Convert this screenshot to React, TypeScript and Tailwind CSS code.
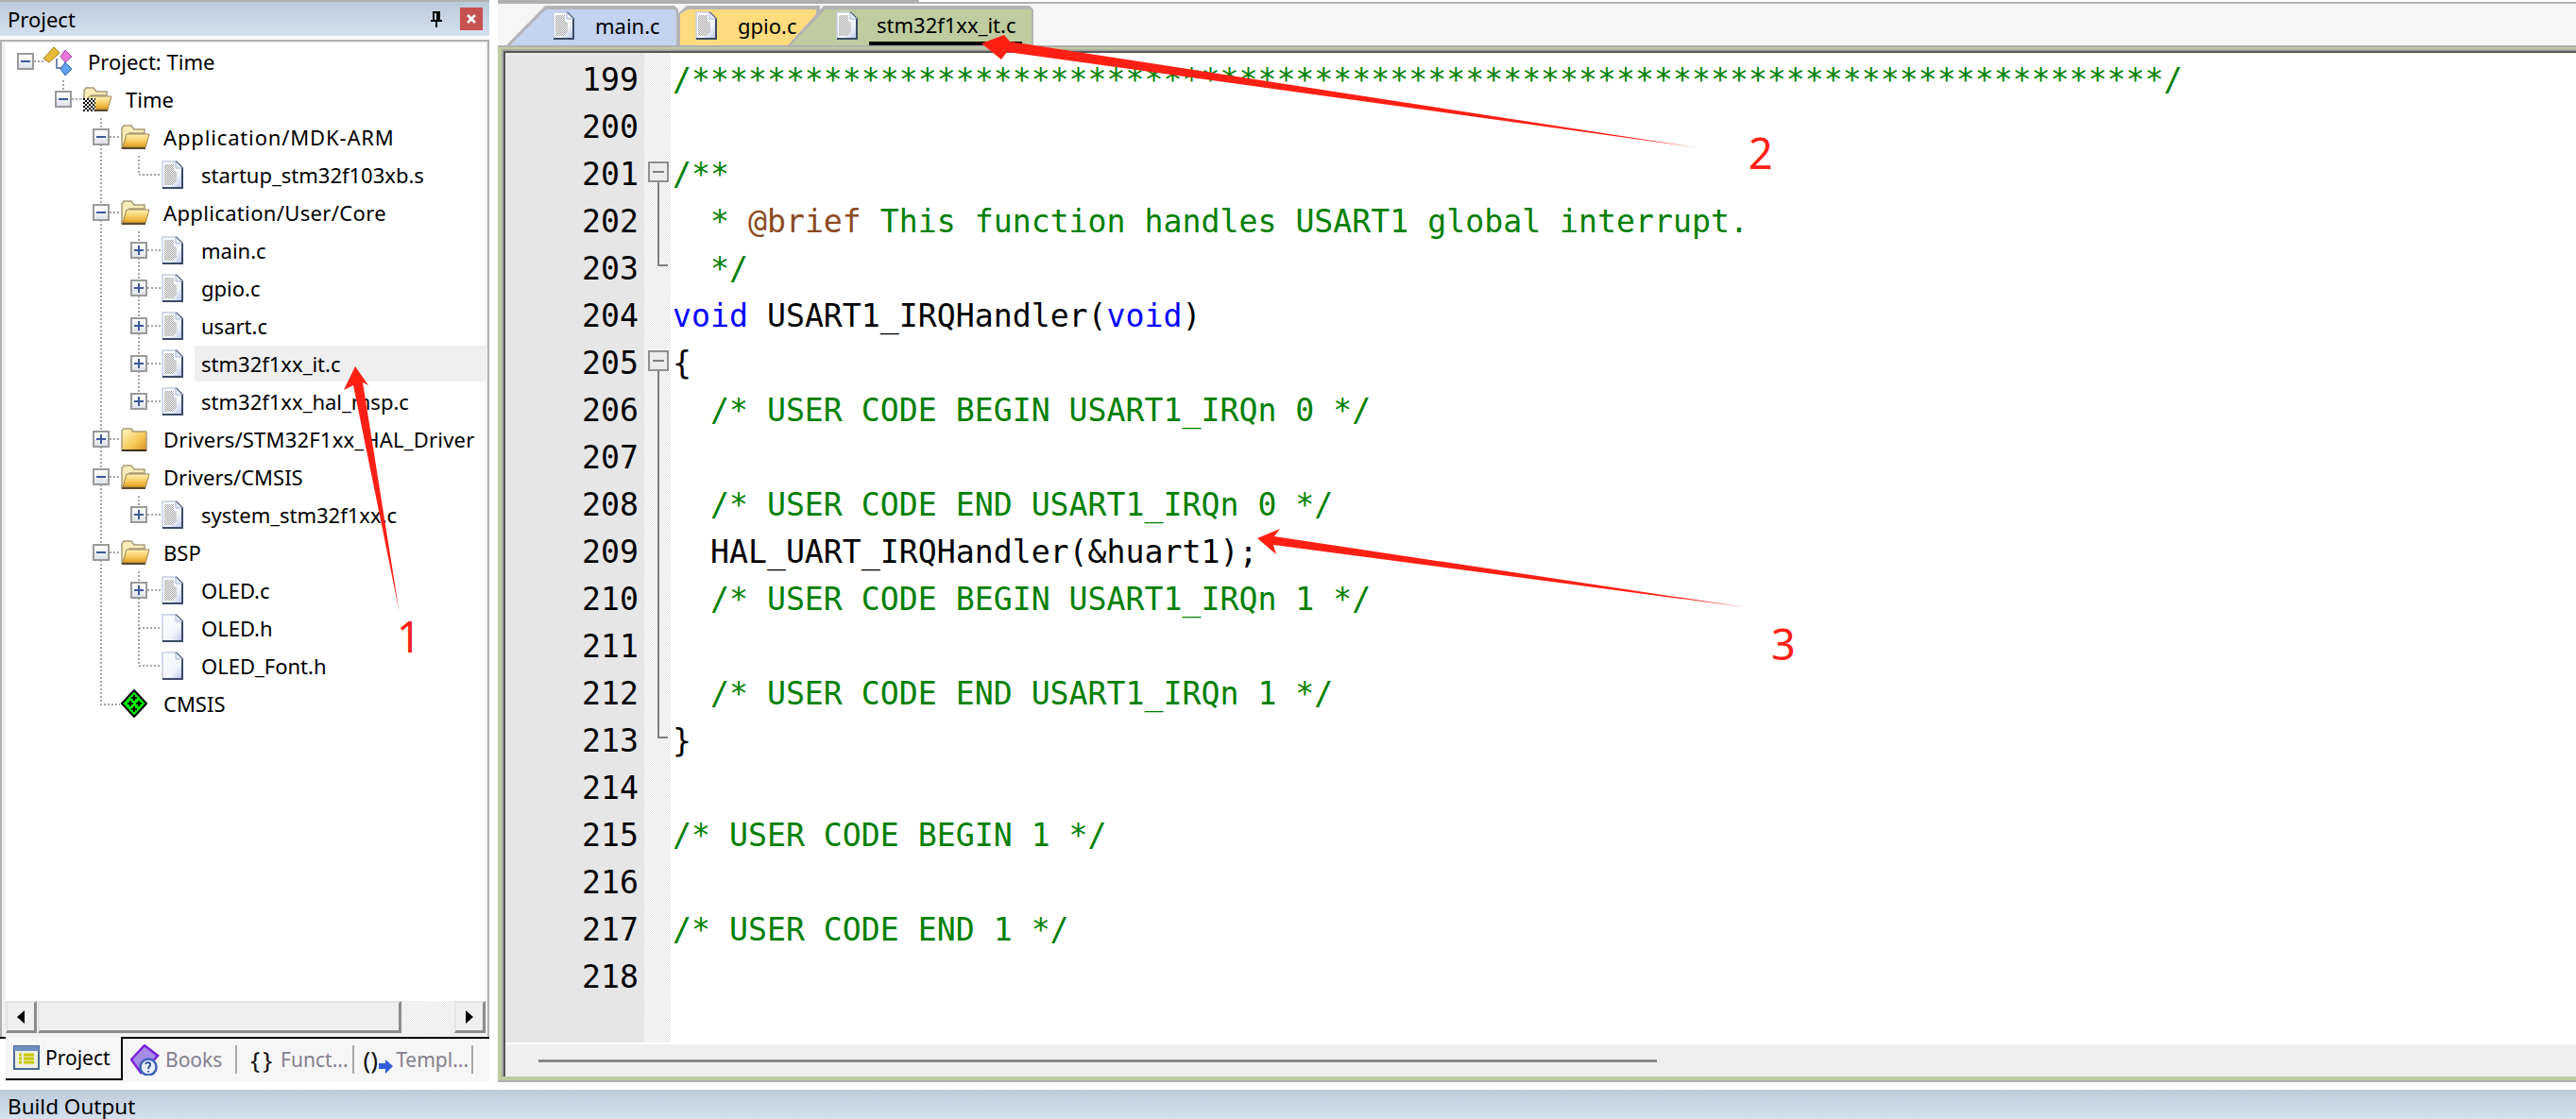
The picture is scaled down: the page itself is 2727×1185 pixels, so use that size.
import React from 'react';

const ui = "[font-family:'Noto_Sans',sans-serif]";
const dither = '[background:repeating-conic-gradient(#e4e4e4_0%_25%,#ffffff_0%_50%)_0_0/2px_2px]';

type Seg = { t: string; c?: string };
type Fold = 'open' | 'mid' | 'end' | 'none';

const green = 'text-[#008000]';
const blue = 'text-[#0000ff]';
const brown = 'text-[#8b4a1f]';

const cm = (t: string): Seg[] => [{ t, c: green }];

const codeLines: { n: number; segs: Seg[]; fold: Fold }[] = [
  { n: 199, segs: cm('/' + '*'.repeat(78) + '/'), fold: 'none' },
  { n: 200, segs: [], fold: 'none' },
  { n: 201, segs: cm('/**'), fold: 'open' },
  {
    n: 202,
    segs: [
      { t: '  * ', c: green },
      { t: '@brief', c: brown },
      { t: ' This function handles USART1 global interrupt.', c: green },
    ],
    fold: 'mid',
  },
  { n: 203, segs: cm('  */'), fold: 'end' },
  {
    n: 204,
    segs: [
      { t: 'void', c: blue },
      { t: ' USART1_IRQHandler(' },
      { t: 'void', c: blue },
      { t: ')' },
    ],
    fold: 'none',
  },
  { n: 205, segs: [{ t: '{' }], fold: 'open' },
  { n: 206, segs: cm('  /* USER CODE BEGIN USART1_IRQn 0 */'), fold: 'mid' },
  { n: 207, segs: [], fold: 'mid' },
  { n: 208, segs: cm('  /* USER CODE END USART1_IRQn 0 */'), fold: 'mid' },
  { n: 209, segs: [{ t: '  HAL_UART_IRQHandler(&huart1);' }], fold: 'mid' },
  { n: 210, segs: cm('  /* USER CODE BEGIN USART1_IRQn 1 */'), fold: 'mid' },
  { n: 211, segs: [], fold: 'mid' },
  { n: 212, segs: cm('  /* USER CODE END USART1_IRQn 1 */'), fold: 'mid' },
  { n: 213, segs: [{ t: '}' }], fold: 'end' },
  { n: 214, segs: [], fold: 'none' },
  { n: 215, segs: cm('/* USER CODE BEGIN 1 */'), fold: 'none' },
  { n: 216, segs: [], fold: 'none' },
  { n: 217, segs: cm('/* USER CODE END 1 */'), fold: 'none' },
  { n: 218, segs: [], fold: 'none' },
];

type Kind = 'project' | 'target' | 'open' | 'closed' | 'doc' | 'header' | 'pack';
type Node = { label: string; depth: number; kind: Kind; box?: '+' | '-'; active?: boolean; spacing?: string };

const treeRows: Node[] = [
  { label: 'Project: Time', depth: 0, kind: 'project', box: '-' },
  { label: 'Time', depth: 1, kind: 'target', box: '-' },
  { label: 'Application/MDK-ARM', depth: 2, kind: 'open', box: '-', spacing: 'tracking-[0.85px]' },
  { label: 'startup_stm32f103xb.s', depth: 3, kind: 'doc' },
  { label: 'Application/User/Core', depth: 2, kind: 'open', box: '-', spacing: 'tracking-[0.35px]' },
  { label: 'main.c', depth: 3, kind: 'doc', box: '+' },
  { label: 'gpio.c', depth: 3, kind: 'doc', box: '+' },
  { label: 'usart.c', depth: 3, kind: 'doc', box: '+' },
  { label: 'stm32f1xx_it.c', depth: 3, kind: 'doc', box: '+', active: true },
  { label: 'stm32f1xx_hal_msp.c', depth: 3, kind: 'doc', box: '+' },
  { label: 'Drivers/STM32F1xx_HAL_Driver', depth: 2, kind: 'closed', box: '+', spacing: 'tracking-[0.2px]' },
  { label: 'Drivers/CMSIS', depth: 2, kind: 'open', box: '-' },
  { label: 'system_stm32f1xx.c', depth: 3, kind: 'doc', box: '+' },
  { label: 'BSP', depth: 2, kind: 'open', box: '-' },
  { label: 'OLED.c', depth: 3, kind: 'doc', box: '+' },
  { label: 'OLED.h', depth: 3, kind: 'header' },
  { label: 'OLED_Font.h', depth: 3, kind: 'header' },
  { label: 'CMSIS', depth: 2, kind: 'pack' },
];

const paddingByDepth = ['pl-[12px]', 'pl-[52px]', 'pl-[92px]', 'pl-[132px]'];

function DocIcon({ plain = false }: { plain?: boolean }) {
  return (
    <svg width="23" height="30" viewBox="0 0 23 30" className="shrink-0">
      <defs>
        <linearGradient id={plain ? 'pageH' : 'pageC'} x1="0" y1="0" x2="1" y2="1">
          <stop offset="0" stopColor="#ffffff" />
          <stop offset="0.65" stopColor="#f2f5fc" />
          <stop offset="1" stopColor="#b4c3e6" />
        </linearGradient>
        <pattern id="docDots" width="2" height="2" patternUnits="userSpaceOnUse">
          <rect width="2" height="2" fill="#f4f4f4" />
          <rect width="1" height="1" fill="#a8a8a8" />
          <rect x="1" y="1" width="1" height="1" fill="#a8a8a8" />
        </pattern>
      </defs>
      <path d="M1 1H15L22 8V29H1Z" fill={`url(#${plain ? 'pageH' : 'pageC'})`} stroke="#c4cee4" strokeWidth="1.5" />
      {!plain && <path d="M3 4H13V10L16 12V22L12 26H3Z" fill="url(#docDots)" />}
      <path d="M15 1L22 8V29H1" fill="none" stroke="#3c4a68" strokeWidth="2" />
      <path d="M15 1V8H22" fill="#e6ecf8" stroke="#aab8d4" strokeWidth="1" />
    </svg>
  );
}

function OpenFolder({ badge = false }: { badge?: boolean }) {
  return (
    <svg width="31" height="26" viewBox="0 0 31 26" className="shrink-0">
      <defs>
        <linearGradient id="folderFront" x1="0" y1="0" x2="0" y2="1">
          <stop offset="0" stopColor="#fff3b8" />
          <stop offset="0.55" stopColor="#f8c95a" />
          <stop offset="1" stopColor="#e09a1c" />
        </linearGradient>
        <pattern id="checker" width="4" height="4" patternUnits="userSpaceOnUse">
          <rect width="4" height="4" fill="#ffffff" />
          <rect width="2" height="2" fill="#000000" />
          <rect x="2" y="2" width="2" height="2" fill="#000000" />
        </pattern>
      </defs>
      <path d="M1 25V4L3 1H11L14 5H25V9H9L5 25Z" fill="#f8ecb8" stroke="#a89a78" strokeWidth="1.5" />
      <path d="M6 10H30L26 24H2Z" fill="url(#folderFront)" stroke="#9a8350" strokeWidth="1" />
      <path d="M1 25H26" stroke="#5a4a30" strokeWidth="2" />
      {badge && <rect x="0" y="12" width="13" height="14" fill="url(#checker)" />}
    </svg>
  );
}

function ClosedFolder() {
  return (
    <svg width="28" height="25" viewBox="0 0 28 25" className="shrink-0">
      <defs>
        <linearGradient id="folderShut" x1="0" y1="0" x2="1" y2="1">
          <stop offset="0" stopColor="#fff6c4" />
          <stop offset="0.6" stopColor="#f6c857" />
          <stop offset="1" stopColor="#d68f1a" />
        </linearGradient>
      </defs>
      <path d="M1 24V3L3 1H11L13 4H27V24Z" fill="url(#folderShut)" stroke="#a89a78" strokeWidth="1.5" />
      <path d="M1 24H27" stroke="#3e3018" strokeWidth="2" />
    </svg>
  );
}

function ProjectIcon() {
  return (
    <svg width="30" height="30" viewBox="0 0 30 30" className="shrink-0">
      <path d="M14 12V22H22" fill="none" stroke="#7088b0" strokeWidth="2" />
      <path d="M0 12L11 0L17 6L6 16Z" fill="#e8bc38" stroke="#9c7c18" strokeWidth="1" />
      <path d="M23 3L30 10L23 16L18 10Z" fill="#e878e0" stroke="#a848a0" strokeWidth="1" />
      <path d="M23 16L30 23L23 30L18 23Z" fill="#60a0ee" stroke="#3068b0" strokeWidth="1" />
    </svg>
  );
}

function PackIcon() {
  return (
    <svg width="28" height="30" viewBox="0 0 28 30" className="shrink-0">
      <path d="M14 1L27 15L14 29L1 15Z" fill="#00ee00" stroke="#000000" strokeWidth="2" />
      <path
        d="M14 6V12M11 9H17M14 18V24M11 21H17M7 15H13M10 12V18M16 15H22M19 12V18"
        stroke="#000000"
        strokeWidth="2"
      />
    </svg>
  );
}

function TreeIcon({ kind }: { kind: Kind }) {
  if (kind === 'project') return <ProjectIcon />;
  if (kind === 'target') return <OpenFolder badge />;
  if (kind === 'open') return <OpenFolder />;
  if (kind === 'closed') return <ClosedFolder />;
  if (kind === 'pack') return <PackIcon />;
  return <DocIcon plain={kind === 'header'} />;
}

const iconOffset: Record<Kind, string> = {
  project: 'ml-[10px]',
  target: 'ml-[12px]',
  open: 'ml-[12px]',
  closed: 'ml-[12px]',
  pack: 'ml-[12px]',
  doc: 'ml-[15px]',
  header: 'ml-[15px]',
};

function TreeBox({ sign }: { sign?: '+' | '-' }) {
  if (!sign) return <span className="w-[18px] h-[18px] shrink-0" />;
  return (
    <span className="relative z-10 w-[18px] h-[18px] shrink-0 border-2 border-[#9a9a9a] bg-gradient-to-b from-white to-[#dfe3ea] flex items-center justify-center">
      <span className="absolute w-[10px] h-[2px] bg-[#3d5a9c]" />
      {sign === '+' && <span className="absolute w-[2px] h-[10px] bg-[#3d5a9c]" />}
    </span>
  );
}

function TreeGuides() {
  // dotted connectors, in page coordinates
  const guides = [
    'M36 66H46',
    'M67 86V97',
    'M76 106H86',
    'M107 126V747H127',
    'M116 146H126',
    'M116 226H126',
    'M116 466H126',
    'M116 506H126',
    'M116 586H126',
    'M147 166V186H170',
    'M147 246V426',
    'M156 266H170',
    'M156 306H170',
    'M156 346H170',
    'M156 386H170',
    'M156 426H170',
    'M147 526V546',
    'M156 546H170',
    'M147 606V706H170',
    'M156 626H170',
    'M147 666H170',
  ];
  return (
    <svg className="absolute left-0 top-0 w-full h-[760px] pointer-events-none">
      <g transform="translate(-6 -47)" fill="none" stroke="#a6a6a6" strokeWidth="2" strokeDasharray="2 2">
        {guides.map((d) => (
          <path key={d} d={d} />
        ))}
      </g>
    </svg>
  );
}

function ScrollButton({ dir }: { dir: 'left' | 'right' }) {
  return (
    <div className="w-[33px] h-[34px] shrink-0 bg-[#f0f0f0] border-t-2 border-l-2 border-t-[#e4e4e4] border-l-[#e4e4e4] border-b-[3px] border-r-[3px] border-b-[#8c8c8c] border-r-[#8c8c8c] flex items-center justify-center">
      <svg width="8" height="14" viewBox="0 0 8 14">
        <path d={dir === 'left' ? 'M8 0V14L0 7Z' : 'M0 0V14L8 7Z'} fill="#000000" />
      </svg>
    </div>
  );
}

function ProjectPanel() {
  return (
    <div className="w-[518px] shrink-0 flex flex-col">
      <div className="h-[2px] bg-[#b0b0b0]" />
      <div className="h-[36px] bg-gradient-to-b from-[#bccbdb] to-[#d3e0ee] flex items-center pl-[8px] pr-[7px]">
        <span className={`${ui} text-[22px] text-black leading-none`}>Project</span>
        <svg width="14" height="18" viewBox="0 0 14 18" className="ml-auto mr-[18px]">
          <path d="M3 1H11V10H13V12H8V18H6V12H1V10H3Z M5 3V10H7V3Z" fill="#000000" fillRule="evenodd" />
        </svg>
        <div className="w-[24px] h-[24px] bg-[#c75050] flex items-center justify-center">
          <svg width="10" height="10" viewBox="0 0 10 10">
            <path d="M1 1L9 9M9 1L1 9" stroke="#ffffff" strokeWidth="2.6" />
          </svg>
        </div>
      </div>
      <div className="h-[4px] bg-white" />
      <div className="h-[1056px] border-2 border-b-0 border-[#b0b0b0] bg-[#f0f0f0] pt-[2px] pl-[4px] pr-[2px] flex flex-col">
        <div className="relative h-[1014px] bg-white overflow-hidden">
          <TreeGuides />
          <div className="flex flex-col -mt-[1px]">
            {treeRows.map((row) => (
              <div key={row.label} className={`h-[40px] flex items-center ${paddingByDepth[row.depth] ?? ''}`}>
                <TreeBox sign={row.box} />
                <span className="w-[50px] shrink-0 flex items-center">
                  <span className={iconOffset[row.kind]}>
                    <TreeIcon kind={row.kind} />
                  </span>
                </span>
                <span
                  className={`${ui} h-[38px] flex-1 flex items-center pl-[7px] text-[22px] text-black whitespace-nowrap ${
                    row.active ? 'bg-[#efefef]' : ''
                  } ${row.spacing ?? ''}`}
                >
                  {row.label}
                </span>
              </div>
            ))}
          </div>
        </div>
        <div className="h-[34px] flex">
          <ScrollButton dir="left" />
          <div className="w-[385px] ml-[1px] shrink-0 bg-[#f0f0f0] border-t-2 border-t-[#e4e4e4] border-l-2 border-l-[#e4e4e4] border-b-[3px] border-r-[3px] border-b-[#8c8c8c] border-r-[#8c8c8c]" />
          <div className={`flex-1 ${dither}`} />
          <ScrollButton dir="right" />
        </div>
      </div>
      <PanelTabs />
    </div>
  );
}

function PanelTabs() {
  const inactive = `${ui} text-[21px] text-[#85808f] leading-none`;
  return (
    <div className="h-[48px] bg-[#f6f6f6] flex">
      <div className="w-[6px] border-t-2 border-black bg-white" />
      <div className="w-[124px] h-[46px] bg-[#f6f6f6] border-r-2 border-b-2 border-black flex items-center pl-[8px]">
        <svg width="28" height="26" viewBox="0 0 28 26" className="shrink-0">
          <rect x="1" y="1" width="26" height="24" fill="#f0efe0" stroke="#4a6c94" strokeWidth="2" />
          <rect x="1" y="1" width="26" height="5" fill="#6f8fc0" />
          <path d="M6 10H9M11 10H22M6 14H9M11 14H22M6 18H9M11 18H22" stroke="#c8c800" strokeWidth="3" />
        </svg>
        <span className={`${ui} ml-[6px] text-[21px] text-black leading-none`}>Project</span>
      </div>
      <div className="flex-1 border-t-2 border-black flex items-center h-[46px]">
        <svg width="32" height="33" viewBox="0 0 32 33" className="ml-[8px] shrink-0">
          <path d="M1 16L15 1L29 12L20 22L11 30Z" fill="#a78be8" stroke="#7a22d8" strokeWidth="2.5" />
          <circle cx="19" cy="24" r="8.5" fill="#e8eefc" stroke="#3c62b8" strokeWidth="2.5" />
          <path d="M16 21C17 18 22 19 21 22C20 24 19 24 19 26M19 28V29.5" fill="none" stroke="#2c4c98" strokeWidth="1.8" />
        </svg>
        <span className={`${inactive} ml-[5px]`}>Books</span>
        <span className="w-[2px] h-[30px] ml-[14px] bg-[#a8a8a8]" />
        <span className={`${ui} ml-[14px] text-[26px] text-[#111111] leading-none tracking-[3px]`}>{'{}'}</span>
        <span className={`${inactive} ml-[6px]`}>Funct...</span>
        <span className="w-[2px] h-[30px] ml-[4px] bg-[#a8a8a8]" />
        <span className={`${ui} ml-[10px] text-[26px] text-[#111111] leading-none`}>{'()'}</span>
        <svg width="15" height="15" viewBox="0 0 15 15" className="ml-[1px] mt-[14px] shrink-0">
          <path d="M0 4H7V0L15 7L7 15V10H0Z" fill="#2f5fd8" />
        </svg>
        <span className={`${inactive} ml-[3px]`}>Templ...</span>
        <span className="w-[2px] h-[30px] ml-[3px] bg-[#a8a8a8]" />
      </div>
    </div>
  );
}

function EditorTab({
  label,
  outline,
  fill,
  width,
  className,
  active = false,
}: {
  label: string;
  outline: string;
  fill: string;
  width: string;
  className: string;
  active?: boolean;
}) {
  return (
    <div className={`relative h-[42px] ${width} ${className} ${outline} bg-[#b4b4b4] shrink-0`}>
      <div className={`absolute inset-0 ${fill}`} />
      <div className="relative h-full flex items-center">{active ? <ActiveLabel label={label} /> : <TabLabel label={label} />}</div>
    </div>
  );
}

function TabLabel({ label }: { label: string }) {
  return (
    <>
      <DocIcon />
      <span className={`${ui} ml-[22px] text-[22px] text-black whitespace-nowrap`}>{label}</span>
    </>
  );
}

function ActiveLabel({ label }: { label: string }) {
  return (
    <>
      <DocIcon />
      <span className={`${ui} ml-[12px] h-[36px] mt-[6px] pl-[8px] w-[162px] border-b-4 border-black text-[22px] leading-[28px] text-black whitespace-nowrap`}>
        {label}
      </span>
    </>
  );
}

function TabStrip() {
  return (
    <div className="h-[48px] flex flex-col">
      <div className="h-[2px] flex">
        <div className="w-[446px] bg-[#b0b0b0]" />
      </div>
      <div className="h-[46px] border-t-2 border-[#b0b0b0] bg-[#f6f6f6] flex items-end pl-[9px]">
        <EditorTab
          label="main.c"
          outline="[clip-path:polygon(0_100%,41px_0,178px_0,182px_4px,182px_100%)]"
          fill="bg-[#c3d3f0] [clip-path:polygon(4px_100%,42px_4px,178px_4px,180px_6px,180px_100%)]"
          width="w-[182px]"
          className="pl-[49px]"
        />
        <EditorTab
          label="gpio.c"
          outline="[clip-path:polygon(0_100%,0_8px,9px_0,150px_0,150px_100%)]"
          fill="bg-[#fedb7d] [clip-path:polygon(2px_100%,2px_9px,10px_4px,146px_4px,146px_100%)]"
          width="w-[150px]"
          className="pl-[18px]"
        />
        <EditorTab
          label="stm32f1xx_it.c"
          outline="[clip-path:polygon(0_100%,38px_0,256px_0,260px_4px,260px_100%)]"
          fill="bg-[#bfcca0] [clip-path:polygon(3px_100%,40px_4px,256px_4px,258px_6px,258px_100%)]"
          width="w-[260px]"
          className="-ml-[34px] pl-[51px]"
          active
        />
      </div>
    </div>
  );
}

function FoldMark({ fold }: { fold: Fold }) {
  if (fold === 'none') return null;
  if (fold === 'mid') return <span className="absolute left-[14px] top-0 bottom-0 w-[2px] bg-[#808080]" />;
  if (fold === 'end')
    return (
      <>
        <span className="absolute left-[14px] top-0 h-[24px] w-[2px] bg-[#808080]" />
        <span className="absolute left-[14px] top-[22px] w-[11px] h-[2px] bg-[#808080]" />
      </>
    );
  return (
    <>
      <span className="absolute left-[14px] top-[34px] bottom-0 w-[2px] bg-[#808080]" />
      <span className="absolute left-[4px] top-[13px] w-[22px] h-[22px] border-2 border-[#909090] bg-[#ececec] flex items-center justify-center">
        <span className="w-[12px] h-[2px] bg-[#808080]" />
      </span>
    </>
  );
}

function Editor() {
  const gutterCols = 'w-[147px] shrink-0 bg-[#e6e6e6]';
  const foldCols = `relative w-[28px] shrink-0 ${dither}`;
  return (
    <div className="flex-1 min-w-0 flex flex-col">
      <TabStrip />
      <div className="h-[92px] flex-1 border-b-2 border-[#b0b0b0] flex flex-col">
        <div className="border-t-2 border-[#b0b0b0] flex-1 flex flex-col">
          <div className="border-t-2 border-l-4 border-b-4 border-[#bfcca0] flex-1 flex flex-col">
            <div className="border-t-2 border-l-2 border-[#a8a8a8] flex-1 flex flex-col">
              <div className="border-t-2 border-l-2 border-[#555555] flex-1 flex flex-col bg-white">
                <div className="h-[2px] flex">
                  <div className={gutterCols} />
                  <div className={foldCols} />
                </div>
                {codeLines.map((line) => (
                  <div key={line.n} className="h-[50px] flex">
                    <div className={`${gutterCols} pt-[3px] flex items-center justify-end pr-[6px] [font-family:'DejaVu_Sans_Mono',monospace] text-[33.2px] text-black`}>
                      {line.n}
                    </div>
                    <div className={foldCols}>
                      <FoldMark fold={line.fold} />
                    </div>
                    <div className="pl-[2px] pt-[3px] flex items-center whitespace-pre [font-family:'DejaVu_Sans_Mono',monospace] text-[33.2px] text-black">
                      {line.segs.map((s, i) => (
                        <span key={i} className={s.c}>
                          {s.t}
                        </span>
                      ))}
                    </div>
                  </div>
                ))}
                <div className="flex-1 flex">
                  <div className={gutterCols} />
                  <div className={foldCols} />
                </div>
                <div className="h-[36px] border-t-2 border-white bg-[#efefef] flex items-center pl-[35px]">
                  <div className="w-[1184px] h-[3px] bg-[#888888]" />
                </div>
              </div>
            </div>
          </div>
          <div className="h-0" />
        </div>
      </div>
    </div>
  );
}

function Annotations() {
  return (
    <>
      <svg className="absolute left-0 top-0 w-[2727px] h-[1185px] pointer-events-none" viewBox="0 0 2727 1185">
        <g fill="#ff2015">
          <polygon points="376,388 390,408 384,405 422.5,647 374,408 364,413" />
          <polygon points="1039,46 1063,37 1069,44 1801,157 1066,55 1060,63" />
          <polygon points="1331,570 1355,560 1349,568 1847,643 1348,577 1351,587" />
        </g>
      </svg>
      <span className={`${ui} absolute left-[420px] top-[650px] text-[45px] leading-[48px] text-[#ff2015]`}>1</span>
      <span className={`${ui} absolute left-[1851px] top-[138px] text-[45px] leading-[48px] text-[#ff2015]`}>2</span>
      <span className={`${ui} absolute left-[1875px] top-[658px] text-[45px] leading-[48px] text-[#ff2015]`}>3</span>
    </>
  );
}

export default function App() {
  return (
    <div className="relative w-[2727px] h-[1185px] bg-white overflow-hidden flex flex-col">
      <div className="h-[1146px] flex">
        <ProjectPanel />
        <div className="w-[9px] shrink-0" />
        <Editor />
      </div>
      <div className="h-[8px]" />
      <div className="h-[31px] bg-gradient-to-b from-[#bfccdb] to-[#d3e0ee] pl-[8px] pb-[2px] flex items-end">
        <span className={`${ui} text-[22.5px] text-black leading-none`}>Build Output</span>
      </div>
      <Annotations />
    </div>
  );
}
